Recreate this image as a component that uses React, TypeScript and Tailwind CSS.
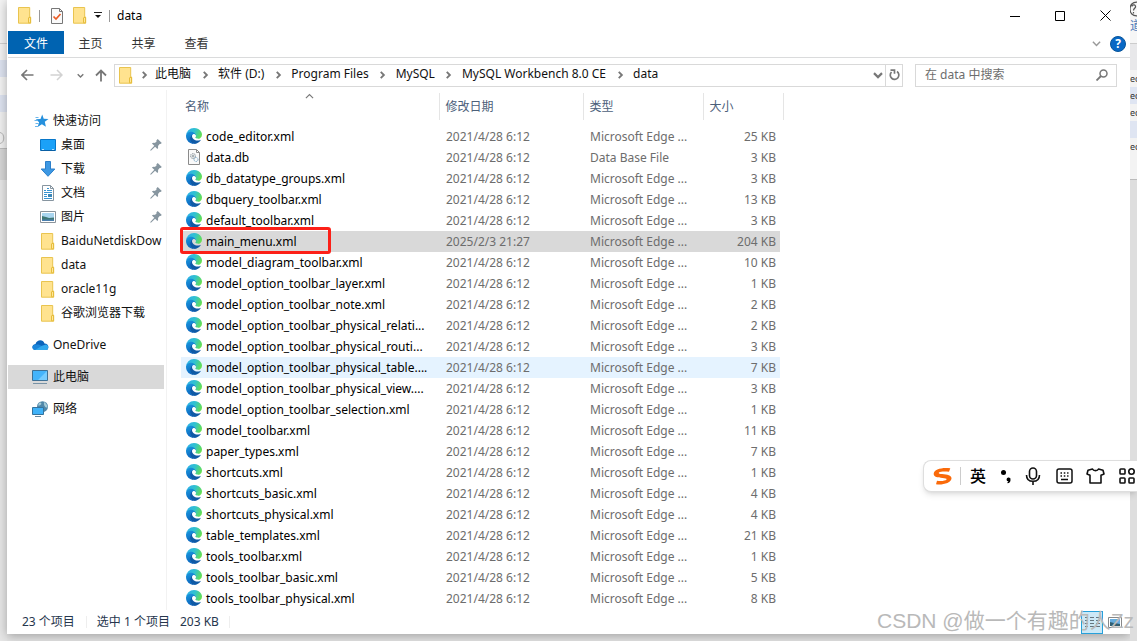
import React from "react";

const ff = "font-['Noto_Sans','Noto_Sans_CJK_SC',sans-serif]";

type FileRow = { name: string; date: string; type: string; size: string; db?: boolean; state?: "selected" | "hover" };
const D = "2021/4/28 6:12";
const E = "Microsoft Edge ...";
const files: FileRow[] = [
  { name: "code_editor.xml", date: D, type: E, size: "25 KB" },
  { name: "data.db", date: D, type: "Data Base File", size: "3 KB", db: true },
  { name: "db_datatype_groups.xml", date: D, type: E, size: "3 KB" },
  { name: "dbquery_toolbar.xml", date: D, type: E, size: "13 KB" },
  { name: "default_toolbar.xml", date: D, type: E, size: "3 KB" },
  { name: "main_menu.xml", date: "2025/2/3 21:27", type: E, size: "204 KB", state: "selected" },
  { name: "model_diagram_toolbar.xml", date: D, type: E, size: "10 KB" },
  { name: "model_option_toolbar_layer.xml", date: D, type: E, size: "1 KB" },
  { name: "model_option_toolbar_note.xml", date: D, type: E, size: "2 KB" },
  { name: "model_option_toolbar_physical_relati...", date: D, type: E, size: "2 KB" },
  { name: "model_option_toolbar_physical_routi...", date: D, type: E, size: "3 KB" },
  { name: "model_option_toolbar_physical_table....", date: D, type: E, size: "7 KB", state: "hover" },
  { name: "model_option_toolbar_physical_view....", date: D, type: E, size: "3 KB" },
  { name: "model_option_toolbar_selection.xml", date: D, type: E, size: "1 KB" },
  { name: "model_toolbar.xml", date: D, type: E, size: "11 KB" },
  { name: "paper_types.xml", date: D, type: E, size: "7 KB" },
  { name: "shortcuts.xml", date: D, type: E, size: "1 KB" },
  { name: "shortcuts_basic.xml", date: D, type: E, size: "4 KB" },
  { name: "shortcuts_physical.xml", date: D, type: E, size: "4 KB" },
  { name: "table_templates.xml", date: D, type: E, size: "21 KB" },
  { name: "tools_toolbar.xml", date: D, type: E, size: "1 KB" },
  { name: "tools_toolbar_basic.xml", date: D, type: E, size: "5 KB" },
  { name: "tools_toolbar_physical.xml", date: D, type: E, size: "8 KB" },
];

function Folder() {
  return (
    <svg width="14" height="17" viewBox="0 0 14 17" className="shrink-0">
      <path d="M.5.5h11.2v9.8h1v5.9H.5z" fill="#ffe38f" stroke="#e9c44f" />
      <path d="M10.500 15.800v-5l2-.6v5.600z" fill="#ffe79b" stroke="#e6bd3c" />
    </svg>
  );
}

function EdgeIcon() {
  return (
    <svg width="16" height="17" viewBox="0 0 256 272" className="shrink-0">
      <defs>
        <linearGradient id="edgeTop" x1="0" y1=".3" x2="1" y2=".6">
          <stop offset="0" stopColor="#2eaee8" />
          <stop offset=".5" stopColor="#30c2d0" />
          <stop offset="1" stopColor="#66e04e" />
        </linearGradient>
        <linearGradient id="edgeLeft" x1="0" y1="0" x2=".4" y2="1">
          <stop offset="0" stopColor="#1b9de2" />
          <stop offset="1" stopColor="#0b62bb" />
        </linearGradient>
      </defs>
      <path d="M231 190.500c-3.400 1.800-6.900 3.400-10.500 4.700a101.700 101.700 0 0 1-35.900 6.500c-47.300 0-88.500-32.500-88.500-74.300a31.500 31.500 0 0 1 16.400-27.300c-42.800 1.800-53.800 46.400-53.800 72.500 0 74 68.100 81.400 82.800 81.400 7.900 0 19.800-2.300 27-4.600l1.300-.4a128.300 128.300 0 0 0 66.600-52.800 4 4 0 0 0-5.400-5.700z" fill="#0f5aa6" />
      <path d="M105.700 241.400a79.200 79.200 0 0 1-22.700-21.300 80.700 80.700 0 0 1 29.500-120c3.200-1.500 8.500-4.100 15.600-4a32.400 32.400 0 0 1 25.700 13 31.900 31.900 0 0 1 6.300 18.700c0-.2 24.500-79.600-80-79.600-43.900 0-80 41.700-80 78.200a130.200 130.200 0 0 0 12.100 56 128 128 0 0 0 156.400 67 75.500 75.500 0 0 1-62.800-8z" fill="url(#edgeLeft)" />
      <path d="M152.300 148.900c-.9 1-3.400 2.500-3.400 5.600 0 2.600 1.700 5.200 4.800 7.300 14.300 10 41.400 8.600 41.500 8.600a59.600 59.600 0 0 0 30.300-8.300 61.400 61.400 0 0 0 30.400-52.900c.3-22.400-8-37.300-11.300-43.900C223.500 23.900 177.700 0 128 0A128 128 0 0 0 0 126.200c.5-36.500 36.800-66 80-66 3.500 0 23.500.3 42 10a72.600 72.600 0 0 1 30.900 29.300c6.100 10.600 7.200 24.100 7.200 29.500s-2.700 13.300-7.800 19.900z" fill="url(#edgeTop)" />
    </svg>
  );
}

function DbIcon() {
  return (
    <svg width="16" height="17" viewBox="0 0 16 17" className="shrink-0" fill="none">
      <path d="M2.500.5h8l3 3v12h-11z" fill="#fafafa" stroke="#8b8b8b" />
      <path d="M10.500.5v3h3" stroke="#8b8b8b" />
      <circle cx="7" cy="7" r="2.500" stroke="#8f999f" strokeDasharray="1.500 .6" />
      <circle cx="7" cy="7" r="1" stroke="#8f999f" />
      <circle cx="10" cy="10.500" r="2" stroke="#7ba7c6" strokeDasharray="1.300 .5" />
    </svg>
  );
}

function Pin() {
  return (
    <svg width="12" height="12" viewBox="0 0 12 12" className="shrink-0">
      <path d="M6.300 1.500 7.700 0 11.800 4.100l-1.300 1-.8-.1-1.700 1.900c.3 1.300.1 2.300-.6 3.100L5.100 7.700 1.200 11.500.3 11.700l.2-.9 3.800-4L1.900 4.400c.8-.7 1.900-.9 3-.5l1.800-1.700z" fill="#8796a0" />
    </svg>
  );
}

function SideIcon({ kind }: { kind: string }) {
  const c = "shrink-0";
  if (kind === "star")
    return (
      <svg width="16" height="16" viewBox="0 0 16 16" className={c}>
        <path d="M9.200 1.500l1.500 4.200 4.800.2-3.700 2.900 1.100 4.900L8.900 11.200l-4.300 2.800 1.500-4.700L2.800 6.200l4.700-.3z" fill="#2590dd" />
        <path d="M2.500 4.500h3M1.500 7.500h3M2.500 10.500h3M2 13.500h3" stroke="#6cb6eb" />
      </svg>
    );
  if (kind === "desktop")
    return (
      <svg width="16" height="16" viewBox="0 0 16 16" className={c}>
        <path d="M.5 2.500h15v11H.5z" fill="#1ba1f8" stroke="#0877c9" />
        <path d="M1 13.500h14" stroke="#0a5fa3" />
        <path d="M2 12.500h2M12 12.500h2" stroke="#b5e1ff" />
      </svg>
    );
  if (kind === "down")
    return (
      <svg width="16" height="16" viewBox="0 0 16 16" className={c}>
        <path d="M5.500.5h5v7.500h4.300L8 15.300 1.200 8h4.300z" fill="#3d98e3" stroke="#2b7fca" />
      </svg>
    );
  if (kind === "doc")
    return (
      <svg width="16" height="16" viewBox="0 0 16 16" className={c} fill="none">
        <path d="M2.500.5h8l3 3v12h-11z" fill="#fff" stroke="#8795a0" />
        <path d="M10.500.5v3h3" stroke="#8795a0" />
        <path d="M4 5.500h2M7 3.500h2M7 5.500h5M4 7.500h8M4 9.500h3M4 11.500h3M4 13.500h8" stroke="#3693d2" />
        <path d="M8 9h4v3H8z" fill="#3b86b6" />
      </svg>
    );
  if (kind === "pic")
    return (
      <svg width="16" height="16" viewBox="0 0 16 16" className={c}>
        <path d="M.5 2.500h15v11H.5z" fill="#fff" stroke="#8a939b" />
        <path d="M2 4h12v8H2z" fill="#a9d5ef" />
        <path d="M2 7l4 1 3 1 5-.5V12H2z" fill="#3e7774" />
        <path d="M2 10.500h12V12H2z" fill="#4a7fae" />
      </svg>
    );
  if (kind === "cloud")
    return (
      <svg width="17" height="12" viewBox="0 0 17 12" className={c}>
        <path d="M3 10.500c-3.500-.5-3.500-5 .5-5.500C5 .5 11 0 12.500 4.500 16 4.500 17.500 8 15.500 10.500z" fill="#0b64bb" />
        <path d="M2.500 11C0 10.500-.5 7 2.500 5.800 5 5 8 5.500 10 7l6 3c-.5.7-1.300 1-2 1z" fill="#1a86db" />
        <path d="M3 11l7-4.200 4-1.300c3 .8 3 5 0 5.500z" fill="#31a8ed" />
      </svg>
    );
  if (kind === "pc")
    return (
      <svg width="17" height="16" viewBox="0 0 17 16" className={c}>
        <path d="M.5 1.500h15v10H.5z" fill="#44b4fb" stroke="#3f7195" />
        <path d="M15 2v9H6z" fill="#75ccff" />
        <path d="M1 14.500h14" stroke="#7892a5" />
      </svg>
    );
  if (kind === "net")
    return (
      <svg width="17" height="16" viewBox="0 0 17 16" className={c}>
        <circle cx="10.500" cy="5.700" r="5.500" fill="#4f87a9" />
        <path d="M7 2c2-1.500 3 .5 2 1.500s-2 1-3 1zM12 1c2 1 3.500 3 3.500 5.500-2 .5-4-2-3.500-5.500z" fill="#a5ccd8" />
        <path d="M.5 6.500h11v7H.5z" fill="#40b2f8" stroke="#34739d" />
        <path d="M3 15.500h6" stroke="#68889d" />
      </svg>
    );
  return <span className="flex w-4 justify-center"><Folder /></span>;
}

const quick = [
  { t: "桌面", k: "desktop", pin: true },
  { t: "下载", k: "down", pin: true },
  { t: "文档", k: "doc", pin: true },
  { t: "图片", k: "pic", pin: true },
  { t: "BaiduNetdiskDow", k: "folder" },
  { t: "data", k: "folder" },
  { t: "oracle11g", k: "folder" },
  { t: "谷歌浏览器下载", k: "folder" },
];

const crumbs = ["此电脑", "软件 (D:)", "Program Files", "MySQL", "MySQL Workbench 8.0 CE", "data"];

function Chevron({ dir = "right", color = "#666", size = 8, w = 1.3 }: { dir?: "right" | "down" | "up"; color?: string; size?: number; w?: number }) {
  const d = dir === "right" ? "M3 1.500 5.500 4 3 6.500" : dir === "down" ? "M.8 2.500 4 5.700 7.200 2.500" : "M.8 5.500 4 2.300 7.200 5.500";
  return (
    <svg width={size} height={size} viewBox="0 0 8 8" fill="none" stroke={color} strokeWidth={w} className="shrink-0">
      <path d={d} />
    </svg>
  );
}

function TitleBar() {
  return (
    <header className="flex h-[31px] items-center pl-[10px]">
      <Folder />
      <span className="ml-[7px] h-3 w-px bg-[#999]" />
      <button aria-label="属性" className="ml-[11px]">
        <svg width="12" height="16" viewBox="0 0 12 16" fill="none">
          <path d="M.5.5h8l3 3v12H.5z" fill="#fafafa" stroke="#777" />
          <path d="M8.500.5v3h3" stroke="#777" />
          <path d="M2.500 8.500 5 11l4.500-5" stroke="#ea5b24" strokeWidth="1.700" />
        </svg>
      </button>
      <button aria-label="新建文件夹" className="ml-[10px]"><Folder /></button>
      <button aria-label="自定义快速访问工具栏" className="ml-[7px]">
        <svg width="8" height="7" viewBox="0 0 8 7"><path d="M0 .5h8" stroke="#222" /><path d="M1 3h6L4 6z" fill="#111" /></svg>
      </button>
      <span className="ml-[7px] h-3 w-px bg-[#999]" />
      <h1 className="ml-[7px] text-xs text-black">data</h1>
      <div className="ml-auto flex items-center pr-px">
        <button aria-label="最小化" className="flex w-[45px] justify-center">
          <svg width="10" height="10" stroke="#000"><path d="M0 5.500h10" /></svg>
        </button>
        <button aria-label="最大化" className="flex w-[45px] justify-center">
          <svg width="10" height="10" stroke="#000" fill="none"><path d="M.5.5h9v9h-9z" /></svg>
        </button>
        <button aria-label="关闭" className="flex w-[47px] justify-center">
          <svg width="11" height="11" stroke="#000"><path d="M.5.5l10 10M10.500.5l-10 10" /></svg>
        </button>
      </div>
    </header>
  );
}

function Ribbon() {
  return (
    <nav className="flex h-[27px] border-b border-[#dadbdc] pb-[3px] text-[#333]">
      <button className="w-14 bg-[#0063b1] pt-[2px] text-white">文件</button>
      <button className="w-[53px] pt-[2px]">主页</button>
      <button className="w-[53px] pt-[2px]">共享</button>
      <button className="w-[53px] pt-[2px]">查看</button>
      <div className="ml-auto flex items-center gap-[9px] pr-1 pt-[2px]">
        <button aria-label="展开功能区"><Chevron dir="down" color="#999" size={9} /></button>
        <button aria-label="帮助" className="flex size-4 items-center justify-center rounded-full border border-[#07549a] bg-[#0868c5] text-xs font-bold leading-none text-white">?</button>
      </div>
    </nav>
  );
}

function AddressBar() {
  return (
    <div className="flex h-8 items-center pr-[13px] pt-[2px]">
      <div className="flex w-[106px] items-center pl-[13px]">
        <button aria-label="后退">
          <svg width="13" height="12" viewBox="0 0 13 12" fill="none" stroke="#777" strokeWidth="1.700"><path d="M12.500 6H1.500M6 1 1 6l5 5" /></svg>
        </button>
        <button aria-label="前进" className="ml-4">
          <svg width="13" height="12" viewBox="0 0 13 12" fill="none" stroke="#d2d2d2" strokeWidth="1.500"><path d="M.5 6h11M7 1l5 5-5 5" /></svg>
        </button>
        <button aria-label="最近位置" className="ml-[14px]"><Chevron dir="down" color="#777" size={7} w={1.600} /></button>
        <button aria-label="上一级" className="ml-[11px]">
          <svg width="12" height="13" viewBox="0 0 12 13" fill="none" stroke="#777" strokeWidth="1.800"><path d="M6 12.500V1.500M1 6.500l5-5 5 5" /></svg>
        </button>
      </div>
      <div className="flex h-[23px] flex-1 items-center border border-[#d9d9d9] pl-1">
        <Folder />
        <ol className="flex items-center pb-[2px]">
          {crumbs.map((c, i) => (
            <li key={c} className="flex items-center">
              <span className={i === 0 ? "flex w-[22px] justify-center pt-[2px]" : "flex w-[27px] justify-center pt-[2px]"}><Chevron color="#777" size={10} w={1.500} /></span>
              <a href="#path" className="whitespace-nowrap">{c}</a>
            </li>
          ))}
        </ol>
        <button aria-label="历史记录" className="ml-auto mr-[2px]"><Chevron dir="down" color="#777" size={10} w={1.700} /></button>
        <button aria-label="刷新" className="flex h-full w-[17px] items-center justify-center border-l border-[#d9d9d9]">
          <svg width="11" height="12" viewBox="0 0 11 12" fill="none" stroke="#777" strokeWidth="1.700"><path d="M8 2.500A4.300 4.300 0 1 1 2.500 3M1.500 1.200h4v3.600" /></svg>
        </button>
      </div>
      <label className="ml-3 flex h-[23px] w-[202px] items-center border border-[#d9d9d9] pl-[9px] pr-2">
        <input aria-label="搜索" placeholder="在 data 中搜索" className="w-full min-w-0 outline-none placeholder:text-[#6d6d6d]" />
        <svg width="12" height="12" viewBox="0 0 12 12" fill="none" stroke="#777" strokeWidth="1.500" className="shrink-0"><circle cx="7.500" cy="4.500" r="3.500" /><path d="M5 7 .5 11.500" strokeWidth="1.800" /></svg>
      </label>
    </div>
  );
}

function Sidebar() {
  return (
    <aside className="w-[159px] shrink-0 border-r border-[#f2f2f2] pt-[19px]">
      <ul>
        <li><a href="#quick" className="flex h-6 items-center gap-1 pl-[25px]"><SideIcon kind="star" />快速访问</a></li>
        {quick.map((q) => (
          <li key={q.t}>
            <a href="#folder" className="flex h-6 items-center pl-8 pr-[2px]">
              <SideIcon kind={q.k} />
              <span className="ml-[5px] flex-1 overflow-hidden whitespace-nowrap">{q.t}</span>
              {q.pin && <span className="pr-[2px]"><Pin /></span>}
            </a>
          </li>
        ))}
        <li className="mt-2"><a href="#onedrive" className="flex h-6 items-center gap-1 pl-6"><SideIcon kind="cloud" />OneDrive</a></li>
        <li className="mt-2"><a href="#pc" className="mr-[2px] flex h-6 items-center gap-1 bg-[#d9d9d9] pl-6"><SideIcon kind="pc" />此电脑</a></li>
        <li className="mt-2"><a href="#network" className="flex h-6 items-center gap-1 pl-6"><SideIcon kind="net" />网络</a></li>
      </ul>
    </aside>
  );
}

function FileTable() {
  return (
    <main className="min-w-0 flex-1 pl-[14px] pt-[3px]">
      <table className="w-[602px] table-fixed border-collapse">
        <colgroup>
          <col className="w-[258px]" /><col className="w-36" /><col className="w-[120px]" /><col className="w-20" />
        </colgroup>
        <thead>
          <tr className="h-[27px] text-left text-[#4c607a]">
            <th className="relative border-r border-[#e5e5e5] p-0 pl-1 font-normal">
              名称
              <span className="absolute -top-px left-[124px] flex"><Chevron dir="up" color="#777" size={9} w={1} /></span>
            </th>
            <th className="border-r border-[#e5e5e5] p-0 pl-[6px] font-normal">修改日期</th>
            <th className="border-r border-[#e5e5e5] p-0 pl-[6px] font-normal">类型</th>
            <th className="border-r border-[#e5e5e5] p-0 pl-[6px] font-normal">大小</th>
          </tr>
        </thead>
      </table>
      <table className="mt-[6px] w-[599px] table-fixed border-collapse">
        <colgroup>
          <col className="w-[259px]" /><col className="w-36" /><col className="w-[120px]" /><col className="w-[76px]" />
        </colgroup>
        <tbody className="text-[#6d6d6d]">
          {files.map((f) => (
            <tr key={f.name} className={f.state === "selected" ? "h-[21px] bg-[#d9d9d9]" : f.state === "hover" ? "h-[21px] bg-[#e5f3ff]" : "h-[21px]"}>
              <td className="relative p-0 pl-[5px] text-black">
                <div className="flex items-center gap-1 whitespace-nowrap">
                  {f.db ? <DbIcon /> : <EdgeIcon />}
                  {f.name}
                </div>
                {f.state === "selected" && <span className="absolute -left-px -top-1 h-[27px] w-[151px] rounded-[3px] border-[3px] border-[#fc2018]" />}
              </td>
              <td className="p-0 pl-[6px]">{f.date}</td>
              <td className="p-0 pl-[6px]">{f.type}</td>
              <td className="p-0 pr-1 text-right">{f.size}</td>
            </tr>
          ))}
        </tbody>
      </table>
    </main>
  );
}

function ImeBar() {
  return (
    <div className="absolute right-0 top-[460px] flex h-8 w-[214px] items-center overflow-hidden rounded-l-lg border border-r-0 border-[#dedede] bg-white pl-[9px] shadow-md">
      <svg width="19" height="17" viewBox="0 0 19 17" className="shrink-0" fill="#fa6a0a">
        <path d="M17.300 0.300 16 3.800C12 3.200 7.500 3.300 6 4.500c-.8.900.5 1.300 3 1.500 5.500.3 9.700 1.400 9.500 4.500-.3 4.500-9 6.800-15.500 5.800l1-3.500c4.500.6 8.500 0 9.500-1.300.7-1-1-1.400-4-1.600C4.500 9.600.5 8.600.7 5.700 1 1.300 9-.8 17.300.3z" />
      </svg>
      <span className="ml-2 h-[18px] w-px shrink-0 bg-[#ccc]" />
      <button className="ml-[9px] shrink-0 text-base font-medium leading-none text-black">英</button>
      <button aria-label="标点" className="ml-[14px] shrink-0">
        <svg width="12" height="16" viewBox="0 0 12 16"><circle cx="3.500" cy="4.500" r="2.500" /><path d="M10.500 12c0 2-1 3-3 3.300l-.2-1c.8-.2 1-.5 1.100-.8A2 2 0 1 1 10.500 12z" /></svg>
      </button>
      <button aria-label="语音" className="ml-[13px] shrink-0">
        <svg width="16" height="18" viewBox="0 0 16 18" fill="none" stroke="#111" strokeWidth="1.600"><rect x="4.500" y="1" width="7" height="11" rx="3.500" /><path d="M1.500 8c0 4 2.500 6.300 6.500 6.300s6.500-2.300 6.500-6.300M8 14.500V18" /></svg>
      </button>
      <button aria-label="键盘" className="ml-[15px] shrink-0">
        <svg width="17" height="16" viewBox="0 0 17 16" fill="none" stroke="#111" strokeWidth="1.500"><rect x="1" y="1" width="15" height="14" rx="2" /><path d="M4.500 5h8M4.500 8h8" strokeDasharray="1.500 1.800" /><path d="M5 11.500h7" /></svg>
      </button>
      <button aria-label="皮肤" className="ml-[13px] shrink-0">
        <svg width="19" height="16" viewBox="0 0 19 16" fill="none" stroke="#111" strokeWidth="1.600" strokeLinejoin="round"><path d="M6.500 1 2 2.300 1 6l3 1.300V15h11V7.300L18 6l-1-3.700L12.500 1c-1 2.200-5 2.200-6 0z" /></svg>
      </button>
      <button aria-label="工具箱" className="ml-[14px] shrink-0">
        <svg width="16" height="16" viewBox="0 0 16 16" fill="none" stroke="#111" strokeWidth="1.600"><rect x="1" y="1" width="5" height="5" rx=".8" /><circle cx="12.500" cy="3.500" r="2.700" /><rect x="1" y="10" width="5" height="5" rx=".8" /><rect x="10" y="10" width="5" height="5" rx=".8" /></svg>
      </button>
    </div>
  );
}

function LeftBackdrop() {
  return (
    <div className="w-[7px] shrink-0 bg-[#e6e6e6]">
      <div className="h-11 border-b border-[#d0d0d0] bg-[#f3f3f3]" />
      <div className="h-4 bg-[#f3f3f3]" />
      <div className="h-[17px] bg-[#dde3f0]" />
      <div className="h-[18px] bg-[#f3f3f3]" />
      <div className="h-[17px] bg-[#dde3f0]" />
      <div className="flex h-[37px] items-center border-b border-[#bbb] bg-[#f0f0f0] pt-4">
        <svg width="5" height="14" viewBox="0 0 5 14" fill="none" stroke="#b5b5b5"><path d="M0 1.500c5 .5 5 10.500 0 11" /></svg>
      </div>
      <div className="h-[31px] bg-[#d6d6d6]" />
    </div>
  );
}

function RightBackdrop() {
  return (
    <div className="w-[7px] shrink-0 overflow-hidden bg-[#dedede] text-[9px] leading-[17px] text-[#333]">
      <div className="h-11 border-b border-[#ccc] bg-[#f6f6f6]">
        <svg width="7" height="18" viewBox="0 0 7 18" fill="none" stroke="#555" strokeWidth="1.200">
          <path d="M7 2.200C2.500 2 0 5 0 9s2.500 7 7 6.800M1.800 6.500C2.500 4 6 4.500 5.500 7c-.3 1.300-2 1.500-2 3.500M3.500 12v1.500" />
        </svg>
        <p className="text-xs text-[#4a78b8]">道</p>
      </div>
      <div className="h-[26px] bg-[#e8e8ea]" />
      <p className="bg-[#f3f3f3]">ec</p>
      <p className="bg-[#dfe5f2]">ec</p>
      <p className="bg-[#f3f3f3]">ec</p>
      <p className="bg-[#dfe5f2]">&nbsp;</p>
      <p className="h-[42px] border-b border-[#bbb] bg-[#f3f3f3]">ec</p>
    </div>
  );
}

export default function App() {
  return (
    <div className={`relative flex min-h-screen overflow-hidden bg-[#e4e4e4] text-xs text-[#111] ${ff}`}>
      <LeftBackdrop />
      <div className="mb-[7px] flex min-w-0 flex-1 flex-col bg-white pl-px shadow-[0_2px_10px_rgba(0,0,0,0.3)]">
        <TitleBar />
        <Ribbon />
        <AddressBar />
        <div className="flex flex-1">
          <Sidebar />
          <FileTable />
        </div>
        <footer className="flex h-6 items-center pl-[14px] text-[#26364d]">
          <span>23 个项目</span>
          <span className="ml-[11px] h-3 w-px bg-[#eee]" />
          <span className="ml-[10px]">选中 1 个项目</span>
          <span className="ml-[10px]">203 KB</span>
          <span className="ml-[10px] h-3 w-px bg-[#eee]" />
          <div className="ml-auto flex items-center gap-[5px] pr-2">
            <button aria-label="详细信息" className="flex h-[23px] w-[22px] items-center justify-center border border-[#26a0da] bg-[#cbe8f6]">
              <svg width="15" height="13" stroke="#66757e" fill="none"><path d="M0 1.500h3M0 4.500h3M0 7.500h3M0 10.500h3M5 1.500h4M5 4.500h4M5 7.500h4M5 10.500h4M11 1.500h4M11 4.500h4M11 7.500h4M11 10.500h4" /></svg>
            </button>
            <button aria-label="大图标">
              <svg width="14" height="11"><path d="M.5.5h13v10H.5z" fill="#fff" stroke="#888" /><path d="M2 2h10v7H2z" fill="#65acdf" /><path d="M2 5l4 1 6 1v2H2z" fill="#315e70" /></svg>
            </button>
          </div>
        </footer>
      </div>
      <RightBackdrop />
      <ImeBar />
      <p className="pointer-events-none absolute bottom-[6px] right-[3px] whitespace-nowrap font-['Liberation_Sans','Noto_Sans_CJK_SC',sans-serif] text-[21px] leading-7 text-[#b9b9b9]">CSDN @做一个有趣的人Zz</p>
    </div>
  );
}
